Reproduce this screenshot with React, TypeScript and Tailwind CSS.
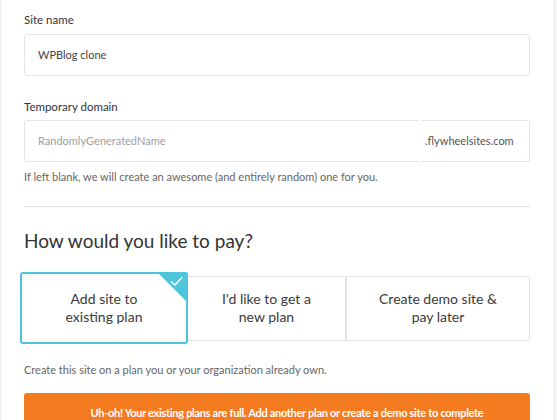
import React from 'react';

const font = { fontFamily: 'Lato, "Open Sans", sans-serif' };

function PlanCard({ label, selected, className }: { label: string[]; selected?: boolean; className: string }) {
    return (
        <div
            className={`flex flex-col items-center justify-center bg-white text-[14px] leading-[18px] text-[#3a3a3a] ${
                selected
                    ? 'relative z-10 h-[72px] rounded-[3px] border-2 border-[#4ec5dc]'
                    : 'h-[65px] border border-[#e3e3e3]'
            } ${className}`}
        >
            {label.map((line) => (
                <span key={line}>{line}</span>
            ))}
            {selected && (
                <div className="absolute -right-[2px] -top-[2px] h-[31px] w-[31px]">
                    <svg width="31" height="31" viewBox="0 0 31 31">
                        <path d="M0 0 H28 A3 3 0 0 1 31 3 V31 Z" fill="#4ec5dc" />
                        <path d="M14 9.5 L18 13 L25 5.5" fill="none" stroke="#fff" strokeWidth="1.6" />
                    </svg>
                </div>
            )}
        </div>
    );
}

export default function App() {
    return (
        <div className="flex h-[420px] w-[557px] overflow-hidden bg-[#f3f3f3] pl-[2px] pr-[4px]" style={font}>
            <div className="flex-1 bg-white pl-[22px] pr-[23px] pt-[12px]">
                {/* Site name */}
                <div className="text-[11.5px] leading-[16px] text-[#333]">Site name</div>
                <div className="mt-[6px] flex h-[42px] items-center rounded-[3px] border border-[#e6e6e6] pl-[13px] text-[11px] text-[#444]">
                    WPBlog clone
                </div>

                {/* Temporary domain */}
                <div className="mt-[23px] text-[11.5px] leading-[16px] text-[#333]">Temporary domain</div>
                <div className="mt-[5px] flex h-[42px]">
                    <div className="flex w-[395px] items-center rounded-l-[3px] border-y border-l border-[#e6e6e6] pl-[13px] text-[11px] text-[#a0a0a0]">
                        RandomlyGeneratedName
                    </div>
                    <div className="ml-[2px] flex flex-1 items-center rounded-r-[3px] border-y border-r border-[#e6e6e6] pl-[4px] text-[11px] text-[#555]">
                        .flywheelsites.com
                    </div>
                </div>
                <div className="mt-[8px] text-[11px] leading-[14px] text-[#666]">
                    If left blank, we will create an awesome (and entirely random) one for you.
                </div>

                <div className="mt-[22px] h-px bg-[#e2e2e2]" />

                <h2 className="mt-[22px] text-[19px] leading-[24px] text-[#333]">How would you like to pay?</h2>

                {/* Plan options */}
                <div className="mt-[19px] flex items-center">
                    <PlanCard label={['Add site to', 'existing plan']} selected className="-ml-[4px] w-[168px]" />
                    <PlanCard label={["I'd like to get a", 'new plan']} className="w-[158px] border-l-0" />
                    <PlanCard label={['Create demo site &', 'pay later']} className="flex-1 rounded-r-[3px] border-l" />
                </div>

                <div className="mt-[19px] text-[11px] leading-[14px] text-[#666]">
                    Create this site on a plan you or your organization already own.
                </div>

                <div className="mt-[16px] flex h-[40px] justify-center rounded-t-[3px] bg-[#f47b20] pl-[20px] pt-[13px] text-[11px] font-bold leading-[14px] tracking-[-0.3px] text-white">
                    Uh-oh! Your existing plans are full. Add another plan or create a demo site to complete
                </div>
            </div>
        </div>
    );
}
